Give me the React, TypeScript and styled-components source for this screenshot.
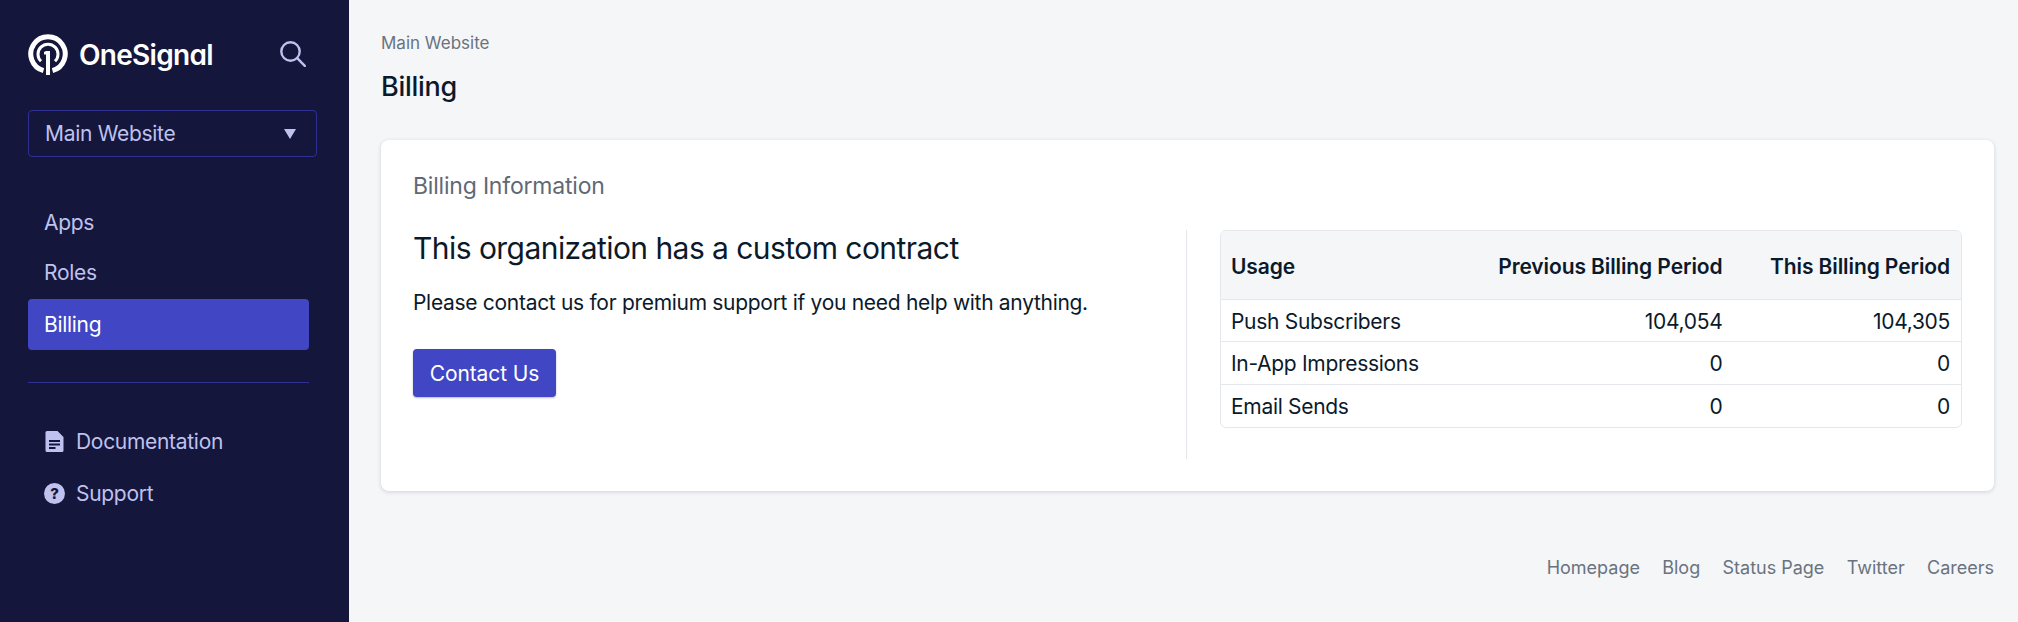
import React from 'react';
import styled, {createGlobalStyle} from 'styled-components';

const GlobalStyle = createGlobalStyle`
  html, body {
    margin: 0;
    height: 100%;
    background: #f5f6f8;
  }
  body {
    font-family: Inter, "Liberation Sans", sans-serif;
    font-size: 21px;
    letter-spacing: -0.3px;
    color: #0b1a2b;
  }
  * {
    box-sizing: border-box;
  }
`;

const Layout = styled.div`
  display: flex;
  height: 622px;
  overflow: hidden;
`;

const Sidebar = styled.aside`
  width: 349px;
  flex-shrink: 0;
  background: #14163c;
  padding: 33px 32px 0 28px;
  color: #bfc1ee;
`;

const Brand = styled.div`
  display: flex;
  align-items: center;
  height: 42px;
`;

const BrandName = styled.span`
  margin-left: 11px;
  padding-top: 1px;
  font-size: 28px;
  font-weight: 600;
  letter-spacing: -0.7px;
  font-feature-settings: 'cv11';
  color: #fff;
`;

const SearchButton = styled.div`
  margin-left: auto;
  margin-right: 11px;
  display: flex;
  color: #bfc1ee;
`;

const AppSelect = styled.div`
  display: flex;
  align-items: center;
  justify-content: space-between;
  width: 289px;
  height: 47px;
  margin-top: 35px;
  padding: 0 20px 0 16px;
  border: 1px solid #2e3192;
  border-radius: 4px;
`;

const Caret = styled.span`
  width: 0;
  height: 0;
  border-left: 6px solid transparent;
  border-right: 6px solid transparent;
  border-top: 10px solid #bfc1ee;
`;

const NavList = styled.nav`
  display: flex;
  flex-direction: column;
  width: 281px;
  margin-top: 40px;
`;

const SecondaryNav = styled(NavList)`
  margin-top: 0;
`;

const NavItem = styled.div<{$active?: boolean}>`
  display: flex;
  align-items: center;
  gap: 11px;
  height: ${props => (props.$active ? '51px' : '50px')};
  margin-top: ${props => (props.$active ? '2px' : '0')};
  padding: 0 16px;
  border-radius: 4px;
  background: ${props => (props.$active ? '#4146c4' : 'transparent')};
  color: ${props => (props.$active ? '#fff' : '#bfc1ee')};
`;

const SecondaryItem = styled(NavItem)`
  height: 52px;
`;

const SideDivider = styled.hr`
  width: 281px;
  margin: 32px 0;
  border: 0;
  border-top: 1px solid #2e3192;
`;

const Main = styled.main`
  flex: 1;
  display: flex;
  flex-direction: column;
  padding: 32px 24px 0 32px;
  min-width: 0;
`;

const Breadcrumb = styled.div`
  font-size: 17px;
  line-height: 23px;
  letter-spacing: 0;
  color: #69737f;
`;

const PageTitle = styled.h1`
  margin: 14px 0 0;
  font-size: 27px;
  line-height: 36px;
  font-weight: 500;
  letter-spacing: -0.3px;
  color: #0b1a2b;
`;

const Card = styled.section`
  margin-top: 35px;
  height: 351px;
  padding: 32px;
  background: #fff;
  border-radius: 8px;
  box-shadow: 0 1px 4px rgba(20, 22, 60, 0.16);
`;

const CardTitle = styled.h2`
  margin: 0;
  font-size: 23px;
  line-height: 28px;
  font-weight: 400;
  letter-spacing: -0.2px;
  color: #5f6975;
`;

const CardBody = styled.div`
  display: flex;
  margin-top: 30px;
  height: 229px;
`;

const ContractPane = styled.div`
  width: 774px;
  flex-shrink: 0;
  padding-right: 32px;
  border-right: 1px solid #e4e7eb;
`;

const ContractTitle = styled.h3`
  margin: 0;
  font-size: 30px;
  line-height: 37px;
  font-weight: 400;
  letter-spacing: -0.55px;
  color: #0b1a2b;
`;

const ContractText = styled.p`
  margin: 22px 0 0;
  line-height: 28px;
`;

const ContactButton = styled.button`
  display: block;
  margin-top: 32px;
  width: 143px;
  height: 48px;
  padding: 0;
  border: 0;
  border-radius: 4px;
  background: #4146c4;
  box-shadow: 0 1px 2px rgba(20, 22, 60, 0.3);
  color: #fff;
  font-family: inherit;
  font-size: 21px;
  letter-spacing: -0.1px;
`;

const UsageWrap = styled.div`
  margin-left: 33px;
  flex: 1;
  align-self: flex-start;
  border: 1px solid #e4e7eb;
  border-radius: 6px;
  overflow: hidden;
`;

const UsageTable = styled.table`
  width: 100%;
  border-collapse: collapse;
`;

const HeadCell = styled.th<{$left?: boolean}>`
  height: 68px;
  padding: 4px 11px 0 ${props => (props.$left ? '10px' : '11px')};
  background: #f5f6f8;
  border-bottom: 1px solid #e4e7eb;
  font-weight: 600;
  letter-spacing: -0.1px;
  text-align: ${props => (props.$left ? 'left' : 'right')};
`;

const BodyCell = styled.td<{$left?: boolean}>`
  height: 42.5px;
  padding: 2px 11px 0 ${props => (props.$left ? '10px' : '11px')};
  text-align: ${props => (props.$left ? 'left' : 'right')};
`;

const BodyRow = styled.tr`
  & + & td {
    border-top: 1px solid #e4e7eb;
  }
`;

const Footer = styled.footer`
  display: flex;
  justify-content: flex-end;
  gap: 22.3px;
  margin-top: 65px;
  font-size: 18px;
  line-height: 24px;
  letter-spacing: 0;
  color: #69737f;
`;

// outer ring, inner arc and the stem of the mark
const LogoIcon = () => (
    <svg width="40" height="44" viewBox="0 0 40 44" fill="none">
        <path d="M15.5 38.6 A17.2 17.2 0 1 1 24.5 38.6" stroke="#fff" strokeWidth="5" />
        <path d="M13 29.3 A10 10 0 1 1 27 29.3" stroke="#fff" strokeWidth="3" />
        <path d="M18 19 H22 V43 H18 V22.5 H16 V20 Z" fill="#fff" />
    </svg>
);

const SearchIcon = () => (
    <svg
        width="26"
        height="26"
        viewBox="0 0 26 26"
        fill="none"
        stroke="currentColor"
        strokeWidth="2.4"
        strokeLinecap="round"
    >
        <circle cx="10.5" cy="10.5" r="9.2" />
        <path d="M17.2 17.2 L24.8 24.8" />
    </svg>
);

const DocIcon = () => (
    <svg width="21" height="21" viewBox="0 0 21 21" fill="currentColor">
        <path
            fillRule="evenodd"
            d="M3 0H13.5L19.5 6V19.5A1.5 1.5 0 0 1 18 21H3A1.5 1.5 0 0 1 1.5 19.5V1.5A1.5 1.5 0 0 1 3 0ZM5 9V11H16V9ZM5 12.5V14.5H16V12.5ZM5 16V18H11.5V16Z"
        />
    </svg>
);

const HelpIcon = () => (
    <svg width="21" height="21" viewBox="0 0 21 21">
        <circle cx="10.5" cy="10.5" r="10.5" fill="currentColor" />
        <text
            x="10.5"
            y="15.8"
            textAnchor="middle"
            fontFamily="Inter, sans-serif"
            fontSize="15"
            fontWeight="800"
            fill="#14163c"
        >
            ?
        </text>
    </svg>
);

const rows = [
    {name: 'Push Subscribers', previous: '104,054', current: '104,305'},
    {name: 'In-App Impressions', previous: '0', current: '0'},
    {name: 'Email Sends', previous: '0', current: '0'},
];

const footerLinks = ['Homepage', 'Blog', 'Status Page', 'Twitter', 'Careers'];

export default function App() {
    return (
        <Layout>
            <GlobalStyle />
            <Sidebar>
                <Brand>
                    <LogoIcon />
                    <BrandName>OneSignal</BrandName>
                    <SearchButton>
                        <SearchIcon />
                    </SearchButton>
                </Brand>
                <AppSelect>
                    Main Website
                    <Caret />
                </AppSelect>
                <NavList>
                    <NavItem>Apps</NavItem>
                    <NavItem>Roles</NavItem>
                    <NavItem $active>Billing</NavItem>
                </NavList>
                <SideDivider />
                <SecondaryNav>
                    <SecondaryItem>
                        <DocIcon />
                        Documentation
                    </SecondaryItem>
                    <SecondaryItem>
                        <HelpIcon />
                        Support
                    </SecondaryItem>
                </SecondaryNav>
            </Sidebar>
            <Main>
                <Breadcrumb>Main Website</Breadcrumb>
                <PageTitle>Billing</PageTitle>
                <Card>
                    <CardTitle>Billing Information</CardTitle>
                    <CardBody>
                        <ContractPane>
                            <ContractTitle>This organization has a custom contract</ContractTitle>
                            <ContractText>
                                Please contact us for premium support if you need help with anything.
                            </ContractText>
                            <ContactButton>Contact Us</ContactButton>
                        </ContractPane>
                        <UsageWrap>
                            <UsageTable>
                                <thead>
                                    <tr>
                                        <HeadCell $left>Usage</HeadCell>
                                        <HeadCell>Previous Billing Period</HeadCell>
                                        <HeadCell>This Billing Period</HeadCell>
                                    </tr>
                                </thead>
                                <tbody>
                                    {rows.map(row => (
                                        <BodyRow key={row.name}>
                                            <BodyCell $left>{row.name}</BodyCell>
                                            <BodyCell>{row.previous}</BodyCell>
                                            <BodyCell>{row.current}</BodyCell>
                                        </BodyRow>
                                    ))}
                                </tbody>
                            </UsageTable>
                        </UsageWrap>
                    </CardBody>
                </Card>
                <Footer>
                    {footerLinks.map(link => (
                        <span key={link}>{link}</span>
                    ))}
                </Footer>
            </Main>
        </Layout>
    );
}
